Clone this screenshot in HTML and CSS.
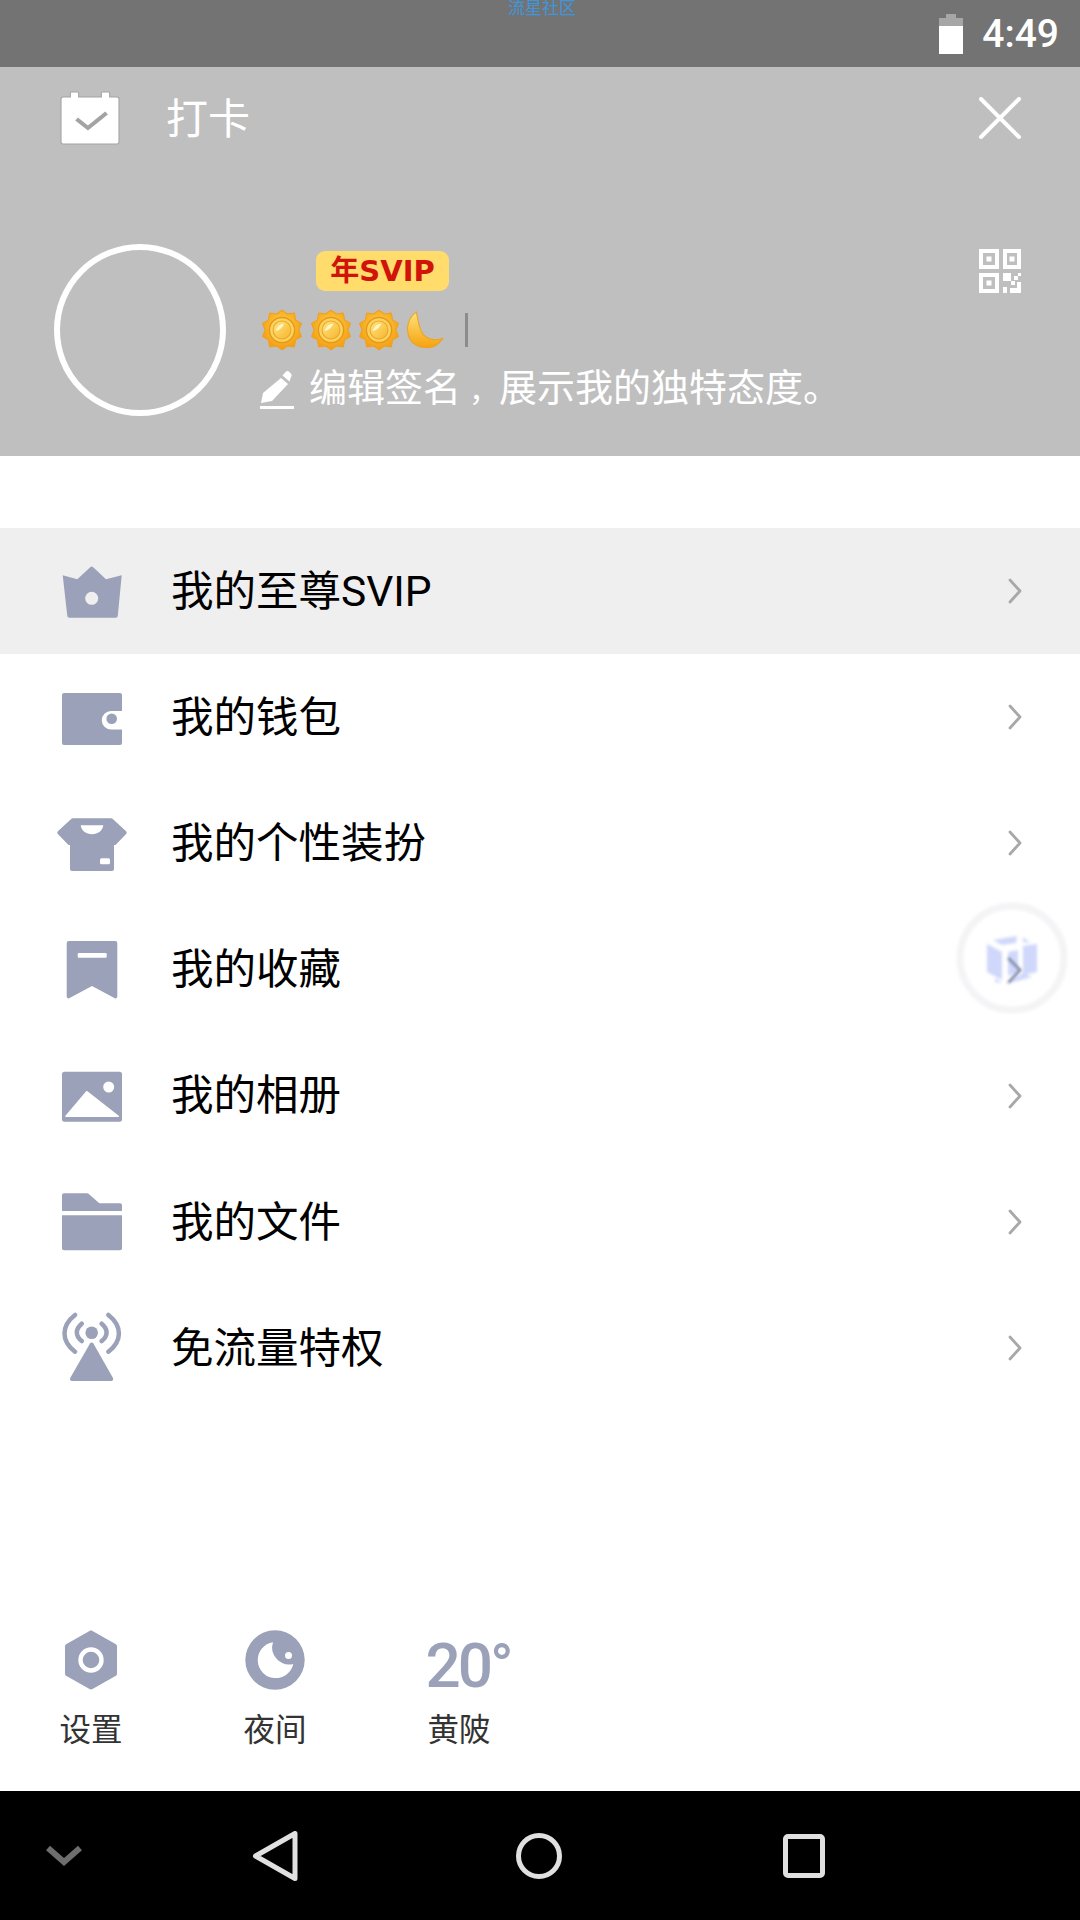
FILE: index.html
```html
<!DOCTYPE html>
<html lang="zh-CN">
<head>
    <meta charset="UTF-8">
    <meta name="viewport" content="width=device-width, initial-scale=1.0">
    <title>我的</title>
    <link rel="stylesheet" href="styles.css">
</head>
<body>
    <svg class="defs" width="0" height="0">
        <defs>
            <radialGradient id="sunOuter" cx="50%" cy="40%" r="60%">
                <stop offset="0" stop-color="#ffd24a"/>
                <stop offset="1" stop-color="#f39c12"/>
            </radialGradient>
            <linearGradient id="sunInner" x1="0" y1="0" x2="1" y2="1">
                <stop offset="0" stop-color="#ffe680"/>
                <stop offset="1" stop-color="#f7b52c"/>
            </linearGradient>
            <linearGradient id="moonFill" x1="0" y1="0" x2="0" y2="1">
                <stop offset="0" stop-color="#ffe27a"/>
                <stop offset="1" stop-color="#f5a20f"/>
            </linearGradient>
            <symbol id="sun" viewBox="0 0 40 40">
                <polygon fill="url(#sunOuter)" stroke="#f0a01a" stroke-width="1" stroke-linejoin="round" points="20,1 24.94,4.78 31.76,3.82 32.94,10.6 38.5,13.82 36,20 38.5,26.18 32.94,29.4 31.76,36.18 24.94,35.22 20,39 15.06,35.22 8.24,36.18 7.06,29.4 1.5,26.18 4,20 1.5,13.82 7.06,10.6 8.24,3.82 15.06,4.78"/>
                <circle cx="20" cy="20" r="12" fill="#fbd25c" stroke="#e59a1c" stroke-width="1.4"/>
                <circle cx="20" cy="20" r="8.5" fill="url(#sunInner)" stroke="#eca52a" stroke-width="1"/>
                <path d="M14 21c1-4 4-7 8-7-1 3-4 6-8 7z" fill="#fff6c8"/>
            </symbol>
            <symbol id="chev" viewBox="0 0 14 26">
                <path d="M2 2l10 11L2 24" fill="none" stroke="#a8a8a8" stroke-width="2.8" stroke-linecap="round" stroke-linejoin="round"/>
            </symbol>
        </defs>
    </svg>

    <div class="status-bar">
        <span class="carrier">流星社区</span>
        <svg class="battery" viewBox="0 0 24 40">
            <path d="M7 0h10v4h7v36H0V4h7z" fill="#a6a6a6"/>
            <rect y="12" width="24" height="28" fill="#fff"/>
        </svg>
        <span class="clock">4:49</span>
    </div>

    <header class="profile">
        <div class="top-row">
            <svg class="calendar" viewBox="0 0 58 54" preserveAspectRatio="none">
                <path d="M11 1h6a1 1 0 0 1 1 1v4h22V2a1 1 0 0 1 1-1h6a1 1 0 0 1 1 1v4h7a2 2 0 0 1 2 2v43a2 2 0 0 1-2 2H3a2 2 0 0 1-2-2V8a2 2 0 0 1 2-2h7V2a1 1 0 0 1 1-1z" fill="#fff" stroke="#a3a3a3" stroke-width="1"/>
                <path d="M16 28l11 9 18-15" fill="none" stroke="#a3a3a3" stroke-width="4"/>
            </svg>
            <span class="checkin">打卡</span>
            <svg class="close" viewBox="0 0 42 42">
                <path d="M2 2l38 38M40 2L2 40" fill="none" stroke="#fff" stroke-width="4" stroke-linecap="round"/>
            </svg>
        </div>
        <div class="user-row">
            <div class="avatar"></div>
            <div class="user-info">
                <span class="vip-badge">年SVIP</span>
                <div class="level">
                    <svg class="sun"><use href="#sun"/></svg>
                    <svg class="sun"><use href="#sun"/></svg>
                    <svg class="sun"><use href="#sun"/></svg>
                    <svg class="moon" viewBox="0 0 40 40">
                        <path d="M9 3C1 8-2 20 3 29c5 8 22 13 31-1-9 3-17 0-20-6-3-6-4-13-5-19z" fill="url(#moonFill)" stroke="#eda21e" stroke-width="1"/>
                    </svg>
                    <span class="cursor"></span>
                </div>
                <div class="sign">
                    <svg class="pen" viewBox="0 0 34 40">
                        <path d="M21 8l7 6-16 17-11 2 2-10z" fill="#fff"/>
                        <path d="M26 1.500c1-.7 2.300-.7 3.200.2l1.800 2c.9 1 .8 2.300 0 3.200l-1.500 4.600-7-6z" fill="#fff"/>
                        <rect y="36" width="34" height="3" fill="#fff"/>
                    </svg>
                    <span>编辑签名<span class="comma">，</span>展示我的独特态度。</span>
                </div>
            </div>
            <svg class="qr" viewBox="0 0 42 44">
                <path fill="#fff" fill-rule="evenodd" d="M0 0h20v20H0zM4 4v12h12V4zM7.500 7.500h5v5h-5zM24 0h18v20H24zM28 4v12h10V4zM30.500 7.500h5v5h-5zM0 24h20v20H0zM4 28v12h12V28zM7.500 31.500h5v5h-5z"/>
                <path fill="#fff" d="M24 24h8v8h-8zM35 27h4v4h-4zM39 24h3v3h-3zM32 32h4v4h-4zM24 38h4v6h-4zM31 39h11v5H31zM38 33h4v6h-4z"/>
            </svg>
        </div>
    </header>

    <main class="menu">
        <div class="menu-row active">
            <svg class="menu-icon" viewBox="0 0 72 72">
                <path d="M6.700 20.300l14.600 4L34.500 12c.7-.7 1.700-.7 2.400 0L50 24.300l15.700-4-3.900 40.400c-.1 1.100-1 2-2.100 2H13.400c-1.100 0-2-.9-2.100-2z"/>
                <circle class="cut" cx="35.700" cy="43.300" r="6.500"/>
            </svg>
            <span class="menu-text">我的至尊SVIP</span>
            <svg class="chevron"><use href="#chev"/></svg>
        </div>
        <div class="menu-row">
            <svg class="menu-icon" viewBox="0 0 72 72">
                <path d="M8 12h56a2 2 0 0 1 2 2v16H55a9 9 0 0 0 0 18.500h11V62a2 2 0 0 1-2 2H8a2 2 0 0 1-2-2V14a2 2 0 0 1 2-2z"/>
                <circle cx="55.700" cy="37.700" r="5.300"/>
            </svg>
            <span class="menu-text">我的钱包</span>
            <svg class="chevron"><use href="#chev"/></svg>
        </div>
        <div class="menu-row">
            <svg class="menu-icon shirt" viewBox="0 0 72 72">
                <path d="M17 11.300h38c.7 0 1.300.3 1.800.7l13.300 12.200c.8.800.8 2 0 2.800L60 37.500c-.6.600-1.200.7-2 .5v24c0 1.100-.9 2-2 2H16c-1.100 0-2-.9-2-2V38c-.8.200-1.400.1-2-.5L1.900 27c-.8-.8-.8-2 0-2.800L15.200 12c.5-.4 1.100-.7 1.800-.7z"/>
                <path class="cut" d="M24.700 18.300h22.600c-.6 5.200-5.300 9-11.300 9s-10.700-3.800-11.300-9z"/>
                <rect class="cut" x="44" y="51.300" width="10" height="6" rx="1.500"/>
            </svg>
            <span class="menu-text">我的个性装扮</span>
            <svg class="chevron"><use href="#chev"/></svg>
        </div>
        <div class="menu-row">
            <svg class="menu-icon" viewBox="0 0 72 72">
                <path d="M12.700 7h46.600a2 2 0 0 1 2 2v53.500c0 1.500-1.600 2.400-2.900 1.600L36 52 13.600 64.100c-1.300.8-2.900-.1-2.900-1.600V9a2 2 0 0 1 2-2z"/>
                <rect class="cut" x="21.700" y="19" width="29" height="4.700" rx="1"/>
            </svg>
            <span class="menu-text">我的收藏</span>
            <svg class="chevron"><use href="#chev"/></svg>
        </div>
        <div class="menu-row">
            <svg class="menu-icon" viewBox="0 0 72 72">
                <rect x="6" y="11.700" width="60" height="50" rx="2.500"/>
                <circle class="cut" cx="52.700" cy="27" r="5.500"/>
                <path class="cut" d="M30.700 31.700l31.600 24.600H10z" stroke="#fff" stroke-width="1.500" stroke-linejoin="round"/>
            </svg>
            <span class="menu-text">我的相册</span>
            <svg class="chevron"><use href="#chev"/></svg>
        </div>
        <div class="menu-row">
            <svg class="menu-icon" viewBox="0 0 72 72">
                <path d="M8 7.300h23c.8 0 1.300.3 1.800.8l10.500 9.200H64a2 2 0 0 1 2 2V25H6V9.300a2 2 0 0 1 2-2z"/>
                <path d="M6 29.300h60v33a2 2 0 0 1-2 2H8a2 2 0 0 1-2-2z"/>
            </svg>
            <span class="menu-text">我的文件</span>
            <svg class="chevron"><use href="#chev"/></svg>
        </div>
        <div class="menu-row">
            <svg class="menu-icon" viewBox="0 0 72 72">
                <circle cx="35.700" cy="20.700" r="6.300"/>
                <path d="M34 31.500c.9-1.200 2.500-1.200 3.400 0l19.600 34.500c.6 1.300-.2 3-1.800 3H16c-1.600 0-2.400-1.700-1.800-3z"/>
                <path class="wave" d="M25.700 11.700c-6.500 5.500-6.500 12 0 17.300M45.700 11.700c6.500 5.500 6.500 12 0 17.300M19 3C5 14 5 29 19 39.700M52.400 3c14 11 14 26 0 36.700"/>
            </svg>
            <span class="menu-text">免流量特权</span>
            <svg class="chevron"><use href="#chev"/></svg>
        </div>
    </main>

    <div class="tools">
        <div class="tool">
            <svg class="tool-icon" viewBox="0 0 60 60">
                <path d="M28.500 .900c1-.6 2.100-.6 3 0l23 13c1 .5 1.500 1.500 1.500 2.600v27c0 1.100-.5 2.100-1.500 2.600l-23 13c-1 .6-2.100.6-3 0l-23-13C4.500 45.600 4 44.600 4 43.500v-27c0-1.100.5-2.100 1.500-2.600z"/>
                <circle cx="30" cy="30" r="10.500" fill="none" stroke="#fff" stroke-width="4.400"/>
            </svg>
            <span class="tool-label">设置</span>
        </div>
        <div class="tool">
            <svg class="tool-icon" viewBox="0 0 60 60">
                <circle cx="30" cy="30" r="29.700"/>
                <path class="cut" d="M28 12.300A18 18 0 1 0 48.300 34 17 17 0 0 1 28 12.300z"/>
                <circle class="cut" cx="43.500" cy="25.500" r="3.500"/>
            </svg>
            <span class="tool-label">夜间</span>
        </div>
        <div class="tool">
            <span class="temp">20°</span>
            <span class="tool-label">黄陂</span>
        </div>
    </div>

    <nav class="nav-bar">
        <svg class="nav-btn" viewBox="0 0 80 50">
            <path d="M25 17l16 14 16-14" fill="none" stroke="#6e6e6e" stroke-width="6"/>
        </svg>
        <svg class="nav-btn" viewBox="0 0 80 50">
            <path d="M20.500 25L60 2.500v45z" fill="none" stroke="#e0e0e0" stroke-width="5" stroke-linejoin="round"/>
        </svg>
        <svg class="nav-btn" viewBox="0 0 80 50">
            <circle cx="40" cy="25" r="20.500" fill="none" stroke="#e0e0e0" stroke-width="5"/>
        </svg>
        <svg class="nav-btn" viewBox="0 0 80 50">
            <rect x="22.500" y="5.500" width="37" height="39" rx="2.500" fill="none" stroke="#e0e0e0" stroke-width="5"/>
        </svg>
    </nav>

    <div class="float-btn">
        <svg viewBox="0 0 150 150">
            <circle cx="82" cy="78" r="52" fill="none" stroke="#f4f4f6" stroke-width="7"/>
            <circle cx="82" cy="78" r="40" fill="#fff" fill-opacity=".6"/>
            <g fill="#bcc7fa" fill-opacity=".72">
                <polygon points="63,60 87,56 86,63 72,65"/>
                <polygon points="93,57 100,63 93,62"/>
                <polygon points="57,64 72,72 72,100 57,92"/>
                <polygon points="93,66 107,64 107,92 93,95"/>
                <polygon points="78,72 88,70 88,92 78,96"/>
                <polygon points="65,98 72,103 65,102"/>
                <polygon points="78,103 93,93 102,97 80,103"/>
            </g>
            <path d="M78 78l12 12-12 13" fill="none" stroke="#8088a8" stroke-width="2.500"/>
        </svg>
    </div>
</body>
</html>
```
FILE: styles.css
```css
* {
    box-sizing: border-box;
}
html, body {
    margin: 0;
    padding: 0;
}
body {
    width: 1080px;
    height: 1920px;
    display: flex;
    flex-direction: column;
    position: relative;
    overflow: hidden;
    background-color: #fff;
    font-family: Roboto, "Noto Sans CJK SC", sans-serif;
    color: #111;
}
svg {
    display: block;
    flex-shrink: 0;
}
.defs {
    position: absolute;
}

/* status bar */
.status-bar {
    height: 67px;
    flex-shrink: 0;
    display: flex;
    align-items: center;
    justify-content: flex-end;
    padding-right: 21px;
    background-color: #737373;
    position: relative;
}
.carrier {
    position: absolute;
    left: 508px;
    top: -2px;
    font-size: 17px;
    line-height: 20px;
    color: #3f96dc;
}
.battery {
    width: 24px;
    height: 40px;
    margin-right: 19px;
}
.clock {
    font-size: 39px;
    font-weight: 500;
    color: #fff;
}

/* header */
.profile {
    height: 389px;
    flex-shrink: 0;
    padding: 25px 59px 0 54px;
    background-color: #bfbfbf;
}
.top-row {
    display: flex;
    align-items: center;
    height: 52px;
    padding-left: 6px;
}
.calendar {
    width: 60px;
    height: 54px;
}
.checkin {
    margin: 4px 0 0 46px;
    font-size: 42px;
    line-height: 52px;
    color: #fff;
}
.close {
    width: 42px;
    height: 42px;
    margin-left: auto;
}
.user-row {
    display: flex;
    margin-top: 100px;
}
.avatar {
    width: 172px;
    height: 172px;
    border: 6px solid #fff;
    border-radius: 50%;
    flex-shrink: 0;
}
.user-info {
    margin-left: 35px;
    padding-top: 7px;
}
.vip-badge {
    display: block;
    width: 133px;
    height: 40px;
    margin-left: 55px;
    border-radius: 9px;
    background-color: #ffdc6c;
    color: #d0140a;
    font-family: "DejaVu Sans", "Noto Sans CJK SC", sans-serif;
    font-size: 29px;
    font-weight: 700;
    line-height: 40px;
    text-align: center;
}
.level {
    display: flex;
    align-items: center;
    gap: 6.5px;
    height: 42px;
    margin-top: 18px;
}
.sun, .moon {
    width: 42px;
    height: 42px;
}
.cursor {
    width: 3px;
    height: 34px;
    margin-left: 10px;
    background-color: #8c8c8c;
}
.sign {
    display: flex;
    align-items: center;
    gap: 15px;
    margin-top: 14px;
    font-size: 38px;
    line-height: 46px;
    color: #fff;
}
.comma {
    padding-left: 8px;
    font-size: 30px;
}
.pen {
    width: 34px;
    height: 40px;
    margin-left: -1px;
}
.qr {
    width: 42px;
    height: 44px;
    margin-left: auto;
    margin-top: 5px;
}

/* menu list */
.menu {
    margin-top: 72px;
}
.menu-row {
    display: flex;
    align-items: center;
    height: 126.2px;
    padding: 0 58px 0 56px;
}
.menu-row.active {
    background-color: #efefef;
}
.menu-icon {
    width: 72px;
    height: 72px;
    fill: #9aa1b8;
}
.menu-icon .cut {
    fill: #fff;
}
.menu-row.active .cut {
    fill: #efefef;
}
.menu-icon .wave {
    fill: none;
    stroke: #9aa1b8;
    stroke-width: 4.5;
    stroke-linecap: round;
}
.menu-text {
    margin: 0 0 8px 43px;
    font-size: 42.5px;
    color: #000;
}
.chevron {
    width: 14px;
    height: 26px;
    margin-left: auto;
}

/* bottom tools */
.tools {
    display: flex;
    gap: 64px;
    margin-top: auto;
    padding: 0 0 40px 31px;
}
.tool {
    width: 120px;
    display: flex;
    flex-direction: column;
    align-items: center;
    gap: 21px;
}
.tool-icon {
    width: 60px;
    height: 60px;
    fill: #9aa1b8;
}
.tool-icon .cut {
    fill: #fff;
}
.tool-label {
    font-size: 31.5px;
    line-height: 40px;
    color: #333;
}
.temp {
    height: 60px;
    margin-left: 18px;
    font-size: 62px;
    font-weight: 500;
    line-height: 71px;
    letter-spacing: -3px;
    color: #9aa1b8;
}

/* android nav */
.nav-bar {
    height: 129px;
    flex-shrink: 0;
    display: flex;
    align-items: center;
    gap: 184px;
    padding-left: 23px;
    background-color: #000;
}
.nav-btn {
    width: 80px;
    height: 50px;
}
.nav-btn:first-child {
    margin-right: -52px;
}

/* floating shortcut over the list */
.float-btn {
    position: absolute;
    left: 930px;
    top: 880px;
    width: 150px;
    height: 150px;
}
.float-btn svg {
    width: 150px;
    height: 150px;
    filter: blur(1.5px);
}
```
